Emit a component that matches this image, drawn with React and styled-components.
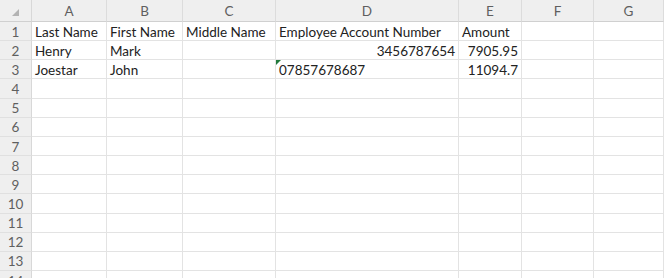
import React from "react";
import styled, { createGlobalStyle } from "styled-components";

const Global = createGlobalStyle`
  html, body { margin: 0; padding: 0; background: #ffffff; overflow: hidden; }
  body { font-family: "Lato", "Liberation Sans", sans-serif; }
`;

const columns = ["A", "B", "C", "D", "E", "F", "G"];

const data = {
  1: ["Last Name", "First Name", "Middle Name", "Employee Account Number", "Amount", "", ""],
  2: ["Henry", "Mark", "", { v: "3456787654", right: true }, { v: "7905.95", right: true }, "", ""],
  3: ["Joestar", "John", "", { v: "07857678687", flag: true }, { v: "11094.7", right: true }, "", ""],
};

const Sheet = styled.div`
  display: grid;
  grid-template-columns: 32px 75px 76px 93px 183px 63px 72px 1fr;
  grid-template-rows: 22px repeat(14, 19.17px);
  width: 664px;
  height: 278px;
  overflow: hidden;
`;

const Corner = styled.div`
  background: #efefef;
  border-right: 1px solid #d8d8d8;
  border-bottom: 1px solid #d0d0d0;
  box-sizing: border-box;
  position: relative;
  &::after {
    content: "";
    position: absolute;
    right: 12px;
    bottom: 5px;
    border-style: solid;
    border-width: 0 0 7px 7px;
    border-color: transparent transparent #b3b3b3 transparent;
  }
`;

const ColHead = styled.div`
  background: #efefef;
  color: #5f5f5f;
  font-size: 13.5px;
  display: flex;
  align-items: center;
  justify-content: center;
  border-right: 1px solid #dcdcdc;
  border-bottom: 1px solid #d0d0d0;
  box-sizing: border-box;
`;

const RowHead = styled.div`
  background: #efefef;
  color: #5f5f5f;
  font-size: 13.5px;
  display: flex;
  align-items: center;
  justify-content: center;
  border-right: 1px solid #d8d8d8;
  border-bottom: 1px solid #e0e0e0;
  box-sizing: border-box;
  padding-top: 1px;
`;

const Cell = styled.div`
  position: relative;
  color: #222222;
  font-size: 13.5px;
  display: flex;
  align-items: center;
  justify-content: ${(p) => (p.$right ? "flex-end" : "flex-start")};
  padding: 1px 3px 0 3px;
  white-space: nowrap;
  border-right: 1px solid #e3e3e3;
  border-bottom: 1px solid #e3e3e3;
  box-sizing: border-box;
  ${(p) =>
    p.$flag &&
    `&::before {
      content: "";
      position: absolute;
      left: 0;
      top: 0;
      border-style: solid;
      border-width: 5px 5px 0 0;
      border-color: #217a3c transparent transparent transparent;
    }`}
`;

export default function App() {
  const rows = Array.from({ length: 14 }, (_, i) => i + 1);
  return (
    <>
      <Global />
      <Sheet>
        <Corner />
        {columns.map((c) => (
          <ColHead key={c}>{c}</ColHead>
        ))}
        {rows.map((r) => (
          <React.Fragment key={r}>
            <RowHead>{r}</RowHead>
            {columns.map((c, i) => {
              const raw = data[r] ? data[r][i] : "";
              const cell = typeof raw === "object" ? raw : { v: raw };
              return (
                <Cell key={c} $right={cell.right} $flag={cell.flag}>
                  {cell.v}
                </Cell>
              );
            })}
          </React.Fragment>
        ))}
      </Sheet>
    </>
  );
}
